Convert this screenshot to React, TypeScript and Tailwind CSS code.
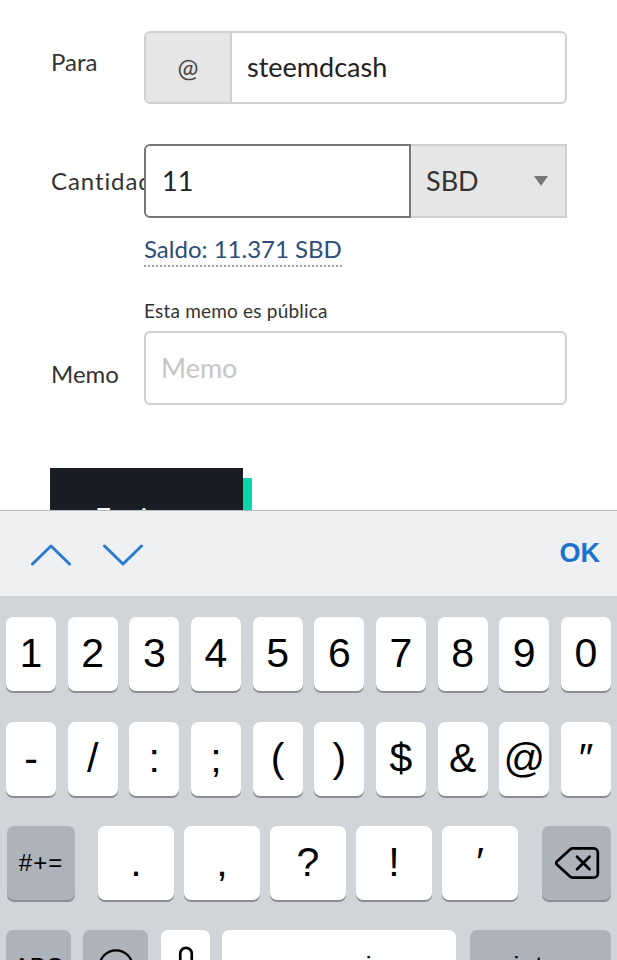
import React from 'react';
import { Delete, Smile, Mic } from 'lucide-react';

const row1 = ['1', '2', '3', '4', '5', '6', '7', '8', '9', '0'];
const row2 = ['-', '/', ':', ';', '(', ')', '$', '&', '@', '″'];
const row3 = ['.', ',', '?', '!', '′'];

const keyBase = 'h-[74px] rounded-[7px] shadow-[0_2px_0_#8b8d92] flex items-center justify-center text-black';

const Key = ({ label, className = '' }: { label: React.ReactNode; className?: string }) => (
  <div className={`${keyBase} bg-white ${className}`}>{label}</div>
);

const GrayKey = ({ label, className = '' }: { label: React.ReactNode; className?: string }) => (
  <div className={`${keyBase} bg-[#adb2bb] ${className}`}>{label}</div>
);

export default function App() {
  return (
    <div className="w-[617px] h-[960px] overflow-hidden bg-white flex flex-col">
      {/* Transfer form */}
      <div className="h-[510px] shrink-0 overflow-hidden pl-[51px] pt-[31px] text-[#333] font-['Lato',sans-serif]">
        {/* Para */}
        <div className="flex">
          <div className="w-[93px] pt-[18px] text-[24px] leading-[26px]">Para</div>
          <div className="w-[423px] h-[73px] flex rounded-[6px] border-2 border-[#d0d0d0] overflow-hidden">
            <div className="w-[86px] bg-[#e6e6e6] border-r-2 border-[#d0d0d0] flex items-center justify-center text-[25px] text-[#444]">
              @
            </div>
            <div className="flex-1 flex items-center pl-[15px] text-[27px] text-[#222]">steemdcash</div>
          </div>
        </div>

        {/* Cantidad */}
        <div className="flex mt-[40px]">
          <div className="w-[93px] pt-[24px] text-[24px] leading-[26px] tracking-[0.9px] whitespace-nowrap">Cantidad</div>
          <div className="relative w-[423px] h-[74px] flex">
            <div className="w-[267px] bg-white rounded-l-[6px] border-2 border-[#777] flex items-center pl-[16px] text-[27px] text-[#222]">
              11
            </div>
            <div className="flex-1 bg-[#e6e6e6] border-2 border-l-0 border-[#d0d0d0] flex items-center justify-between pl-[15px] pr-[17px] text-[27px] text-[#333]">
              <span>SBD</span>
              <span className="w-0 h-0 border-l-[7px] border-r-[7px] border-t-[10px] border-l-transparent border-r-transparent border-t-[#777]" />
            </div>
          </div>
        </div>

        {/* Saldo */}
        <div className="ml-[93px] mt-[16px]">
          <span className="inline-block text-[24px] leading-[30px] text-[#2c4d78] border-b-2 border-dotted border-[#9aa3ad] pb-[1px]">
            Saldo: 11.371 SBD
          </span>
        </div>

        {/* Memo */}
        <div className="ml-[93px] mt-[33px] text-[19px] leading-[22px] tracking-[0.2px] text-[#333]">Esta memo es pública</div>
        <div className="flex mt-[9px]">
          <div className="w-[93px] pt-[30px] text-[24px] leading-[26px]">Memo</div>
          <div className="w-[423px] h-[74px] rounded-[6px] border-2 border-[#d0d0d0] flex items-center pl-[15px] text-[27px] text-[#c6c6c6]">
            Memo
          </div>
        </div>

        {/* Enviar */}
        <div className="flex items-start mt-[63px] -ml-[1px]">
          <div className="w-[193px] h-[90px] bg-[#1a1e24] text-white text-[28px] leading-[28px] pl-[45px] pt-[36px]">Enviar</div>
          <div className="w-[9px] h-[80px] mt-[10px] bg-[#06d6a9]" />
        </div>
      </div>

      {/* Keyboard */}
      <div className="flex-1 flex flex-col font-['Liberation_Sans',Arial,sans-serif]">
        <div className="h-[86px] shrink-0 bg-[#eff0f2] border-t border-[#babdc2] flex items-center justify-between pl-[31px] pr-[17px]">
          <div className="flex items-center gap-[32px] pt-[2px]">
            <svg width="40" height="22" viewBox="0 0 40 22" fill="none" stroke="#2a7bd2" strokeWidth="3" strokeLinecap="round" strokeLinejoin="round">
              <polyline points="1.5,20 20,2 38.5,20" />
            </svg>
            <svg width="40" height="22" viewBox="0 0 40 22" fill="none" stroke="#2a7bd2" strokeWidth="3" strokeLinecap="round" strokeLinejoin="round">
              <polyline points="1.5,2 20,20 38.5,2" />
            </svg>
          </div>
          <span className="text-[27px] font-semibold text-[#1a73cf]">OK</span>
        </div>

        <div className="flex-1 bg-[#d1d4d9] pt-[21px]">
          <div className="flex justify-between px-[6px]">
            {row1.map(k => (
              <Key key={k} label={k} className="w-[50px] text-[41px]" />
            ))}
          </div>
          <div className="flex justify-between px-[6px] mt-[31px]">
            {row2.map(k => (
              <Key key={k} label={k} className="w-[50px] text-[41px]" />
            ))}
          </div>
          <div className="flex items-center px-[6px] mt-[30px]">
            <GrayKey label="#+=" className="w-[68px] ml-[1px] text-[24px] tracking-[1px]" />
            <div className="flex gap-[10px] ml-[23px]">
              {row3.map(k => (
                <Key key={k} label={k} className="w-[76px] text-[41px]" />
              ))}
            </div>
            <GrayKey
              label={<Delete size={50} strokeWidth={1.3} />}
              className="w-[69px] ml-auto"
            />
          </div>
          <div className="flex px-[6px] mt-[30px]">
            <GrayKey label="ABC" className="w-[65px] text-[24px]" />
            <GrayKey label={<Smile size={40} strokeWidth={1.4} />} className="w-[65px] ml-[12px]" />
            <Key label={<Mic size={46} strokeWidth={1.4} />} className="w-[49px] ml-[13px]" />
            <Key label="espacio" className="w-[234px] ml-[12px] text-[28px]" />
            <GrayKey label="intro" className="w-[141px] ml-[14px] text-[28px]" />
          </div>
        </div>
      </div>
    </div>
  );
}
